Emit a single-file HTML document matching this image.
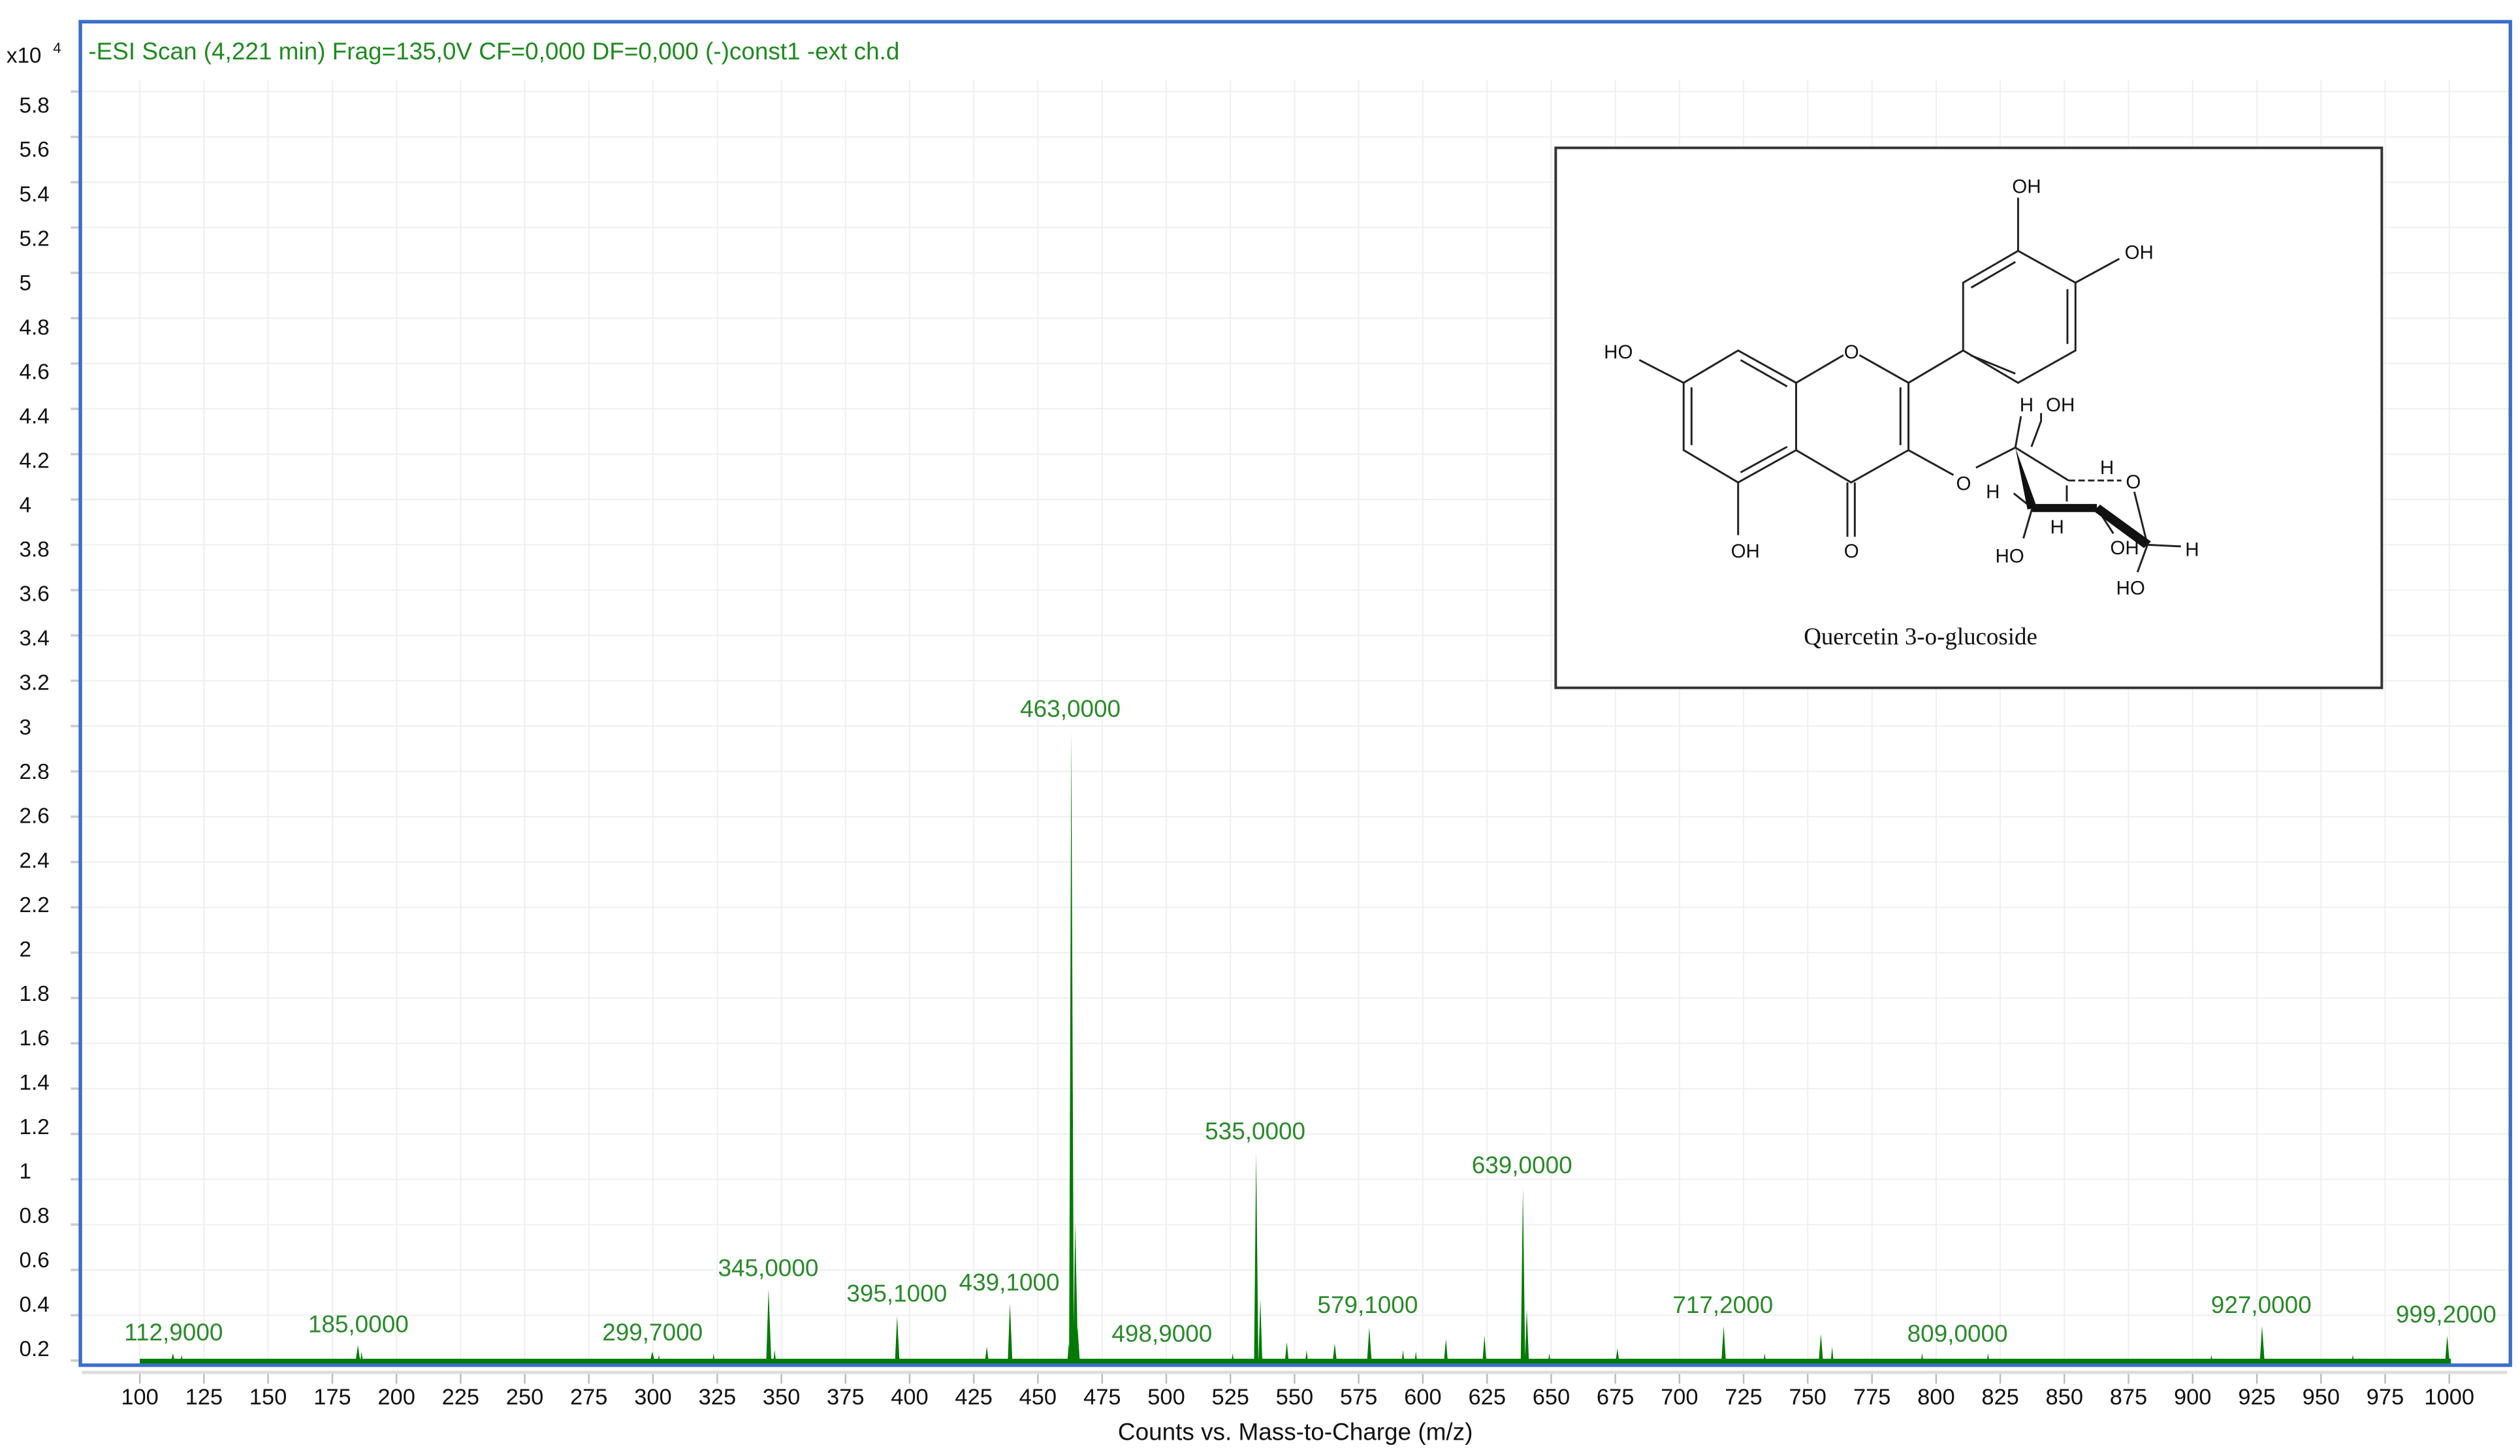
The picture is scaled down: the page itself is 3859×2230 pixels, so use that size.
<!DOCTYPE html>
<html><head><meta charset="utf-8"><style>
html,body{margin:0;padding:0;background:#fff;}
svg{display:block;}
</style></head><body>
<svg width="3859" height="2230" viewBox="0 0 1568 906" preserveAspectRatio="none" xmlns="http://www.w3.org/2000/svg" font-family="Liberation Sans, Arial, sans-serif">
<rect width="1568" height="906" fill="#fff"/>
<g stroke="#efefef" stroke-width="0.8">
<line x1="49" y1="57" x2="1562" y2="57"/><line x1="49" y1="85.2" x2="1562" y2="85.2"/><line x1="49" y1="113.4" x2="1562" y2="113.4"/><line x1="49" y1="141.6" x2="1562" y2="141.6"/><line x1="49" y1="169.8" x2="1562" y2="169.8"/><line x1="49" y1="198" x2="1562" y2="198"/><line x1="49" y1="226.2" x2="1562" y2="226.2"/><line x1="49" y1="254.4" x2="1562" y2="254.4"/><line x1="49" y1="282.6" x2="1562" y2="282.6"/><line x1="49" y1="310.8" x2="1562" y2="310.8"/><line x1="49" y1="339" x2="1562" y2="339"/><line x1="49" y1="367.2" x2="1562" y2="367.2"/><line x1="49" y1="395.4" x2="1562" y2="395.4"/><line x1="49" y1="423.6" x2="1562" y2="423.6"/><line x1="49" y1="451.8" x2="1562" y2="451.8"/><line x1="49" y1="480" x2="1562" y2="480"/><line x1="49" y1="508.2" x2="1562" y2="508.2"/><line x1="49" y1="536.4" x2="1562" y2="536.4"/><line x1="49" y1="564.6" x2="1562" y2="564.6"/><line x1="49" y1="592.8" x2="1562" y2="592.8"/><line x1="49" y1="621" x2="1562" y2="621"/><line x1="49" y1="649.2" x2="1562" y2="649.2"/><line x1="49" y1="677.4" x2="1562" y2="677.4"/><line x1="49" y1="705.6" x2="1562" y2="705.6"/><line x1="49" y1="733.8" x2="1562" y2="733.8"/><line x1="49" y1="762" x2="1562" y2="762"/><line x1="49" y1="790.2" x2="1562" y2="790.2"/><line x1="49" y1="818.4" x2="1562" y2="818.4"/>
<line x1="87" y1="50" x2="87" y2="850"/><line x1="126.9" y1="50" x2="126.9" y2="850"/><line x1="166.8" y1="50" x2="166.8" y2="850"/><line x1="206.8" y1="50" x2="206.8" y2="850"/><line x1="246.7" y1="50" x2="246.7" y2="850"/><line x1="286.6" y1="50" x2="286.6" y2="850"/><line x1="326.5" y1="50" x2="326.5" y2="850"/><line x1="366.4" y1="50" x2="366.4" y2="850"/><line x1="406.3" y1="50" x2="406.3" y2="850"/><line x1="446.3" y1="50" x2="446.3" y2="850"/><line x1="486.2" y1="50" x2="486.2" y2="850"/><line x1="526.1" y1="50" x2="526.1" y2="850"/><line x1="566" y1="50" x2="566" y2="850"/><line x1="605.9" y1="50" x2="605.9" y2="850"/><line x1="645.8" y1="50" x2="645.8" y2="850"/><line x1="685.8" y1="50" x2="685.8" y2="850"/><line x1="725.7" y1="50" x2="725.7" y2="850"/><line x1="765.6" y1="50" x2="765.6" y2="850"/><line x1="805.5" y1="50" x2="805.5" y2="850"/><line x1="845.4" y1="50" x2="845.4" y2="850"/><line x1="885.3" y1="50" x2="885.3" y2="850"/><line x1="925.3" y1="50" x2="925.3" y2="850"/><line x1="965.2" y1="50" x2="965.2" y2="850"/><line x1="1005.1" y1="50" x2="1005.1" y2="850"/><line x1="1045" y1="50" x2="1045" y2="850"/><line x1="1084.9" y1="50" x2="1084.9" y2="850"/><line x1="1124.8" y1="50" x2="1124.8" y2="850"/><line x1="1164.8" y1="50" x2="1164.8" y2="850"/><line x1="1204.7" y1="50" x2="1204.7" y2="850"/><line x1="1244.6" y1="50" x2="1244.6" y2="850"/><line x1="1284.5" y1="50" x2="1284.5" y2="850"/><line x1="1324.4" y1="50" x2="1324.4" y2="850"/><line x1="1364.3" y1="50" x2="1364.3" y2="850"/><line x1="1404.3" y1="50" x2="1404.3" y2="850"/><line x1="1444.2" y1="50" x2="1444.2" y2="850"/><line x1="1484.1" y1="50" x2="1484.1" y2="850"/><line x1="1524" y1="50" x2="1524" y2="850"/>
</g>
<g stroke="#ccc" stroke-width="1.5">
<line x1="44" y1="57" x2="49" y2="57"/><line x1="44" y1="85.2" x2="49" y2="85.2"/><line x1="44" y1="113.4" x2="49" y2="113.4"/><line x1="44" y1="141.6" x2="49" y2="141.6"/><line x1="44" y1="169.8" x2="49" y2="169.8"/><line x1="44" y1="198" x2="49" y2="198"/><line x1="44" y1="226.2" x2="49" y2="226.2"/><line x1="44" y1="254.4" x2="49" y2="254.4"/><line x1="44" y1="282.6" x2="49" y2="282.6"/><line x1="44" y1="310.8" x2="49" y2="310.8"/><line x1="44" y1="339" x2="49" y2="339"/><line x1="44" y1="367.2" x2="49" y2="367.2"/><line x1="44" y1="395.4" x2="49" y2="395.4"/><line x1="44" y1="423.6" x2="49" y2="423.6"/><line x1="44" y1="451.8" x2="49" y2="451.8"/><line x1="44" y1="480" x2="49" y2="480"/><line x1="44" y1="508.2" x2="49" y2="508.2"/><line x1="44" y1="536.4" x2="49" y2="536.4"/><line x1="44" y1="564.6" x2="49" y2="564.6"/><line x1="44" y1="592.8" x2="49" y2="592.8"/><line x1="44" y1="621" x2="49" y2="621"/><line x1="44" y1="649.2" x2="49" y2="649.2"/><line x1="44" y1="677.4" x2="49" y2="677.4"/><line x1="44" y1="705.6" x2="49" y2="705.6"/><line x1="44" y1="733.8" x2="49" y2="733.8"/><line x1="44" y1="762" x2="49" y2="762"/><line x1="44" y1="790.2" x2="49" y2="790.2"/><line x1="44" y1="818.4" x2="49" y2="818.4"/><line x1="44" y1="846.6" x2="49" y2="846.6"/>
</g>
<g font-size="13.5" fill="#111">
<text x="12" y="70">5.8</text><text x="12" y="97.6">5.6</text><text x="12" y="125.3">5.4</text><text x="12" y="152.9">5.2</text><text x="12" y="180.6">5</text><text x="12" y="208.2">4.8</text><text x="12" y="235.8">4.6</text><text x="12" y="263.5">4.4</text><text x="12" y="291.1">4.2</text><text x="12" y="318.8">4</text><text x="12" y="346.4">3.8</text><text x="12" y="374">3.6</text><text x="12" y="401.7">3.4</text><text x="12" y="429.3">3.2</text><text x="12" y="457">3</text><text x="12" y="484.6">2.8</text><text x="12" y="512.2">2.6</text><text x="12" y="539.9">2.4</text><text x="12" y="567.5">2.2</text><text x="12" y="595.2">2</text><text x="12" y="622.8">1.8</text><text x="12" y="650.4">1.6</text><text x="12" y="678.1">1.4</text><text x="12" y="705.7">1.2</text><text x="12" y="733.4">1</text><text x="12" y="761">0.8</text><text x="12" y="788.6">0.6</text><text x="12" y="816.3">0.4</text><text x="12" y="843.9">0.2</text>
<text x="4" y="39" font-size="13.5">x10</text><text x="33" y="33" font-size="9">4</text>
</g>
<line x1="51" y1="854" x2="1560" y2="854" stroke="#ddd" stroke-width="2"/>
<g stroke="#bbb" stroke-width="1">
<line x1="87" y1="855" x2="87" y2="861"/><line x1="126.9" y1="855" x2="126.9" y2="861"/><line x1="166.8" y1="855" x2="166.8" y2="861"/><line x1="206.8" y1="855" x2="206.8" y2="861"/><line x1="246.7" y1="855" x2="246.7" y2="861"/><line x1="286.6" y1="855" x2="286.6" y2="861"/><line x1="326.5" y1="855" x2="326.5" y2="861"/><line x1="366.4" y1="855" x2="366.4" y2="861"/><line x1="406.3" y1="855" x2="406.3" y2="861"/><line x1="446.3" y1="855" x2="446.3" y2="861"/><line x1="486.2" y1="855" x2="486.2" y2="861"/><line x1="526.1" y1="855" x2="526.1" y2="861"/><line x1="566" y1="855" x2="566" y2="861"/><line x1="605.9" y1="855" x2="605.9" y2="861"/><line x1="645.8" y1="855" x2="645.8" y2="861"/><line x1="685.8" y1="855" x2="685.8" y2="861"/><line x1="725.7" y1="855" x2="725.7" y2="861"/><line x1="765.6" y1="855" x2="765.6" y2="861"/><line x1="805.5" y1="855" x2="805.5" y2="861"/><line x1="845.4" y1="855" x2="845.4" y2="861"/><line x1="885.3" y1="855" x2="885.3" y2="861"/><line x1="925.3" y1="855" x2="925.3" y2="861"/><line x1="965.2" y1="855" x2="965.2" y2="861"/><line x1="1005.1" y1="855" x2="1005.1" y2="861"/><line x1="1045" y1="855" x2="1045" y2="861"/><line x1="1084.9" y1="855" x2="1084.9" y2="861"/><line x1="1124.8" y1="855" x2="1124.8" y2="861"/><line x1="1164.8" y1="855" x2="1164.8" y2="861"/><line x1="1204.7" y1="855" x2="1204.7" y2="861"/><line x1="1244.6" y1="855" x2="1244.6" y2="861"/><line x1="1284.5" y1="855" x2="1284.5" y2="861"/><line x1="1324.4" y1="855" x2="1324.4" y2="861"/><line x1="1364.3" y1="855" x2="1364.3" y2="861"/><line x1="1404.3" y1="855" x2="1404.3" y2="861"/><line x1="1444.2" y1="855" x2="1444.2" y2="861"/><line x1="1484.1" y1="855" x2="1484.1" y2="861"/><line x1="1524" y1="855" x2="1524" y2="861"/>
</g>
<g font-size="14" fill="#111" text-anchor="middle">
<text x="87" y="874">100</text><text x="126.9" y="874">125</text><text x="166.8" y="874">150</text><text x="206.8" y="874">175</text><text x="246.7" y="874">200</text><text x="286.6" y="874">225</text><text x="326.5" y="874">250</text><text x="366.4" y="874">275</text><text x="406.3" y="874">300</text><text x="446.3" y="874">325</text><text x="486.2" y="874">350</text><text x="526.1" y="874">375</text><text x="566" y="874">400</text><text x="605.9" y="874">425</text><text x="645.8" y="874">450</text><text x="685.8" y="874">475</text><text x="725.7" y="874">500</text><text x="765.6" y="874">525</text><text x="805.5" y="874">550</text><text x="845.4" y="874">575</text><text x="885.3" y="874">600</text><text x="925.3" y="874">625</text><text x="965.2" y="874">650</text><text x="1005.1" y="874">675</text><text x="1045" y="874">700</text><text x="1084.9" y="874">725</text><text x="1124.8" y="874">750</text><text x="1164.8" y="874">775</text><text x="1204.7" y="874">800</text><text x="1244.6" y="874">825</text><text x="1284.5" y="874">850</text><text x="1324.4" y="874">875</text><text x="1364.3" y="874">900</text><text x="1404.3" y="874">925</text><text x="1444.2" y="874">950</text><text x="1484.1" y="874">975</text><text x="1524" y="874">1000</text>
<text x="806" y="896" font-size="15">Counts vs. Mass-to-Charge (m/z)</text>
</g>
<g fill="#007a00">
<rect x="87" y="845.5" width="1438" height="3.5"/>
<path d="M106,849 L107.6,842 L109.2,849Z M221,849 L222.7,837 L224.4,849Z M404,849 L405.9,841 L407.8,849Z M476.7,849 L478.2,802 L480,849Z M556.8,849 L558.2,819 L559.8,849Z M627,849 L628.4,811 L630,849Z M665.2,849 L666.6,455 L668.2,849Z M667.8,849 L669,760 L670.8,849Z M669,849 L670.5,826 L672,849Z M780.3,849 L781.6,717 L783,849Z M783,849 L784.2,808 L785.5,849Z M850.5,849 L852,826 L853.6,849Z M946.2,849 L947.6,739 L949,849Z M948.8,849 L950,815 L951.4,849Z M1071,849 L1072.5,825 L1074,849Z M1131.5,849 L1133,830 L1134.5,849Z M1406,849 L1407.5,825 L1409.2,849Z M1521.3,849 L1522.7,831 L1524.3,849Z M898.3,849 L899.7,833 L901,849Z M922.3,849 L923.7,831 L925,849Z M799.3,849 L800.7,835 L802,849Z M829,849 L830.5,836 L832,849Z M612.6,849 L614,838 L615.4,849Z M1005,849 L1006.4,839 L1007.8,849Z M1139,849 L1140,838 L1141,849Z M224,849 L225,841 L226,849Z M112,849 L113,843 L114,849Z M664,849 L665,836 L666,849Z M481,849 L482,840 L483,849Z M409,849 L410,843 L411,849Z M872,849 L873,840 L874,849Z M880,849 L881,841 L882,849Z M812,849 L813,840 L814,849Z M1236,849 L1237,842 L1238,849Z M1375,849 L1376,843 L1377,849Z M443,849 L444,842 L445,849Z M766,849 L767,842 L768,849Z M963,849 L964,842 L965,849Z M1097,849 L1098,842 L1099,849Z M1195,849 L1196,842 L1197,849Z M1463,849 L1464,843 L1465,849Z"/>
</g>
<g font-size="15" fill="#2a8a2a" text-anchor="middle">
<text x="108" y="834">112,9000</text><text x="223" y="829">185,0000</text><text x="406" y="834">299,7000</text><text x="478" y="794">345,0000</text><text x="558" y="810">395,1000</text><text x="628" y="803">439,1000</text><text x="666" y="446">463,0000</text><text x="723" y="835">498,9000</text><text x="781" y="709">535,0000</text><text x="851" y="817">579,1000</text><text x="947" y="730">639,0000</text><text x="1072" y="817">717,2000</text><text x="1218" y="835">809,0000</text><text x="1407" y="817">927,0000</text><text x="1522" y="823">999,2000</text>
</g>
<text x="55" y="37" font-size="15" fill="#1f8a1f">-ESI Scan (4,221 min) Frag=135,0V CF=0,000 DF=0,000 (-)const1 -ext ch.d</text>
<rect x="50" y="13.5" width="1512" height="836" fill="none" stroke="#3a6fc8" stroke-width="2.2"/>
<rect x="968" y="92" width="514" height="336" fill="#fff" stroke="#333" stroke-width="1.6"/>
<g stroke="#222" stroke-width="1.2" fill="none">
<path d="M1047.6,238.2 L1081.5,218.1 L1117.6,238.2 L1117.6,280.1 L1081.5,300.2 L1047.6,280.1 Z"/>
<path d="M1083,224 L1112,240.5 M1052.5,241 L1052.5,277 M1083,294 L1112,278"/>
<path d="M1117.6,238.2 L1147,221 M1157,221 L1187.5,238.2 L1187.5,280.1 L1151.8,300.2 L1117.6,280.1"/>
<path d="M1182.5,241 L1182.5,277"/>
<path d="M1149.5,300.2 L1149.5,334 M1154.1,300.2 L1154.1,334"/>
<path d="M1081.5,300.2 L1081.5,333 M1047.6,238.2 L1020,224"/>
<path d="M1187.5,238.2 L1221.5,218.1"/>
<path d="M1221.5,218.1 L1221.5,175.9 L1255.7,156.1 L1291.4,175.9 L1291.4,218.1 L1255.7,238.2 Z"/>
<path d="M1226.5,179 L1254,163 M1286.4,180 L1286.4,214 M1226,221 L1254,232.5"/>
<path d="M1255.7,156.1 L1255.7,123 M1291.4,175.9 L1318.7,161"/>
<path d="M1187.5,280.1 L1215.5,295.6 M1229.5,291 L1254,278.5 L1257.5,259 M1254,278.5 L1287.2,299 M1264,278 L1270,262 L1270,257"/>
<path d="M1287.2,299 L1320,299" stroke-dasharray="4,2"/>
<path d="M1336.2,339 L1328,306 M1336.2,339 L1357,340 M1336.2,339 L1330,356 M1264.5,316.1 L1253,307 M1264.5,316.1 L1259,335 M1304.7,316.1 L1315,332 M1286,302 L1286,312"/>
</g>
<path d="M1254,278.5 L1261.5,317 L1267.5,316 Z" fill="#111"/>
<path d="M1264.5,313.6 L1304.7,313.6 L1304.7,318.6 L1264.5,318.6 Z" fill="#111"/>
<path d="M1302.7,318 L1334,341 L1338.4,337 L1306.7,314 Z" fill="#111"/>
<g font-size="12" fill="#111" text-anchor="middle">
<text x="1261" y="120">OH</text><text x="1331" y="161">OH</text><text x="1007" y="223">HO</text><text x="1152" y="223">O</text><text x="1221.8" y="305">O</text><text x="1152" y="347">O</text><text x="1086" y="347">OH</text><text x="1261" y="256">H</text><text x="1282" y="256">OH</text><text x="1311" y="295">H</text><text x="1327.4" y="304">O</text><text x="1240" y="310">H</text><text x="1280" y="332">H</text><text x="1250.5" y="350">HO</text><text x="1322" y="345">OH</text><text x="1364" y="346">H</text><text x="1325.7" y="370">HO</text>
</g>
<text x="1195" y="401" font-family="Liberation Serif, serif" font-size="15" fill="#111" text-anchor="middle">Quercetin 3-o-glucoside</text>
</svg>
</body></html>
